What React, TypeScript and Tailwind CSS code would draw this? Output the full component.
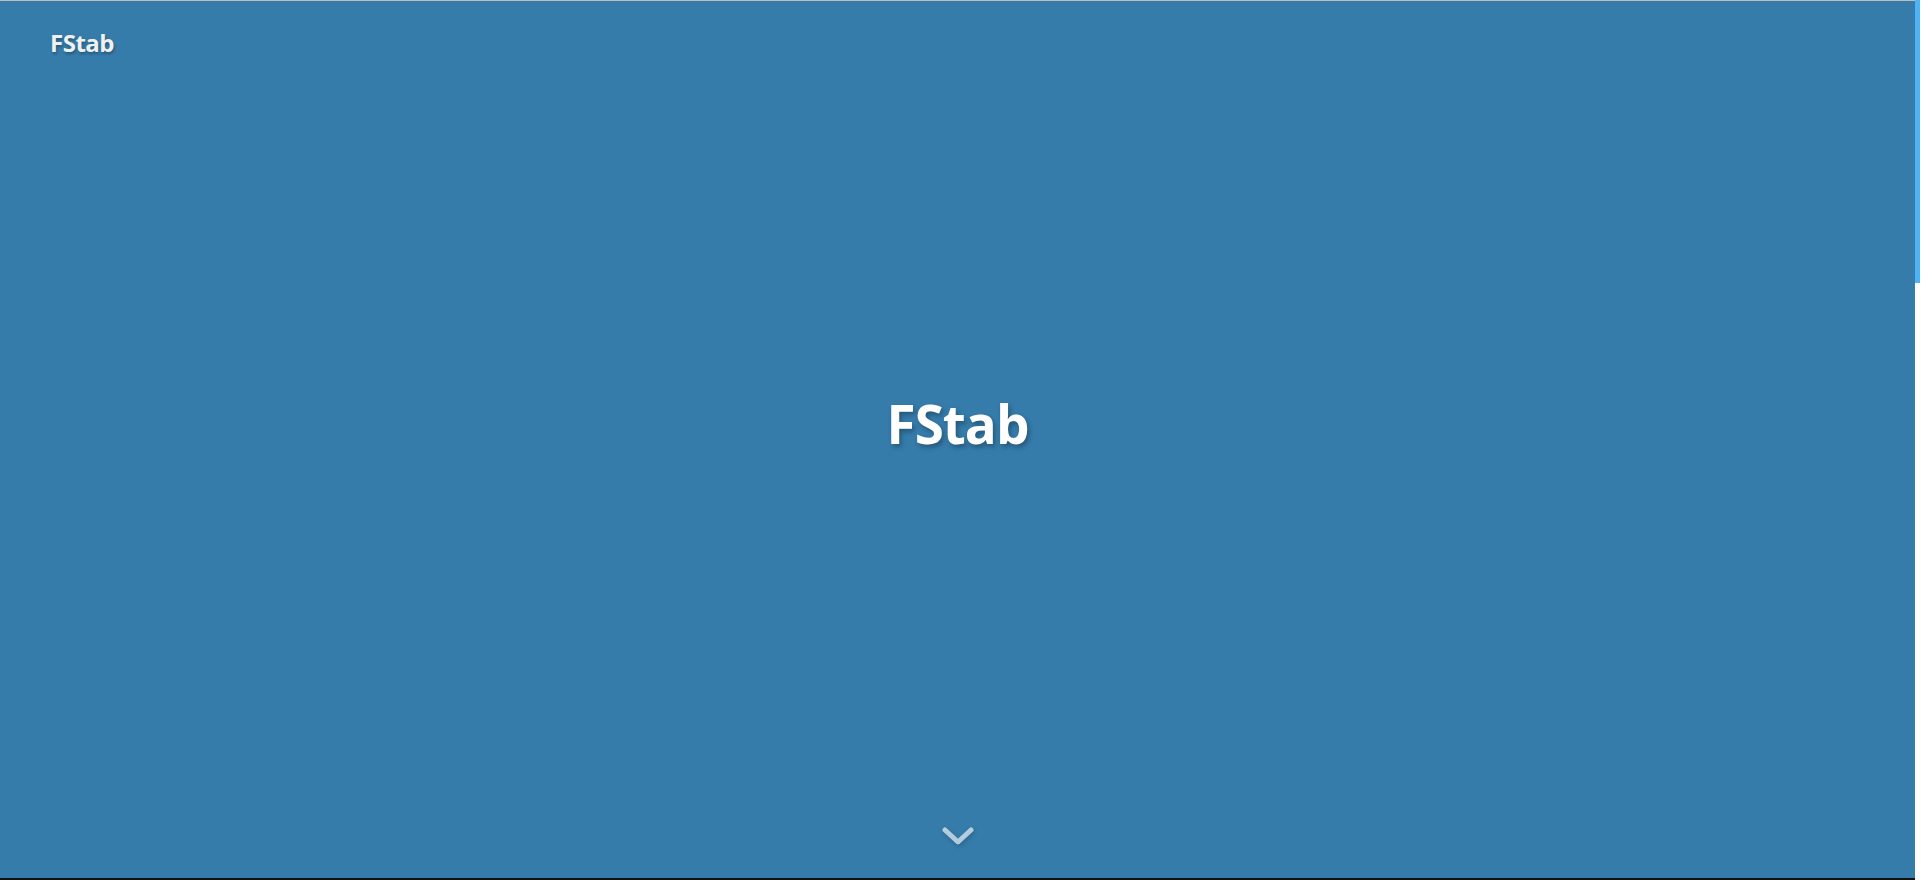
import React from "react";

export default function App() {
  return (
    <div
      className="flex h-[880px] w-full overflow-hidden bg-white"
      style={{ fontFamily: '"Open Sans", "Noto Sans", sans-serif' }}
    >
      <section className="flex h-[880px] min-w-0 flex-1 flex-col border-t border-t-[#bdbdbd] border-b-2 border-b-[#111111] bg-[#357cab] text-white">
        <header className="flex h-[84px] shrink-0 items-center px-[50px]">
          <span className="text-[24px] font-bold leading-none tracking-[-0.5px] text-[#f0f0f0] [text-shadow:1px_2px_3px_rgba(0,0,0,0.3)]">
            FStab
          </span>
        </header>
        <main className="flex flex-1 items-center justify-center">
          <h1 className="text-[53px] font-bold leading-none tracking-[-1px] [text-shadow:2px_3px_5px_rgba(0,0,0,0.3)]">
            FStab
          </h1>
        </main>
        <footer className="flex h-[117px] shrink-0 justify-center pt-[65px]">
          <svg
            width="34"
            height="22"
            viewBox="0 0 34 22"
            className="[filter:drop-shadow(1px_2px_2px_rgba(0,0,0,0.25))]"
          >
            <polyline
              points="4,4 17,16 30,4"
              fill="none"
              stroke="rgba(225,235,245,0.75)"
              strokeWidth="5"
              strokeLinecap="round"
              strokeLinejoin="round"
            />
          </svg>
        </footer>
      </section>
      <aside className="flex w-[6px] shrink-0 flex-col bg-white">
        <div className="h-[283px] w-[5px] bg-[#4db3f5]" />
      </aside>
    </div>
  );
}
